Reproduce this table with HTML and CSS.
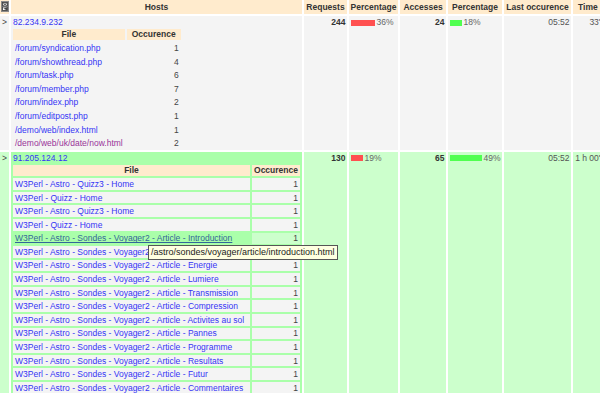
FILE: index.html
```html
<!DOCTYPE html>
<html>
<head>
<meta charset="utf-8">
<title>Hosts</title>
<link rel="stylesheet" href="styles.css">
</head>
<body>
<div class="page">
<table class="stats">
  <thead>
    <tr>
      <th class="c-icon"><svg class="toggle-icon" width="8" height="11" viewBox="0 0 8 11"><rect x="0.5" y="0.5" width="7" height="10" fill="#d8d8d8" stroke="#8a8a8a"/><rect x="1.5" y="1.5" width="5" height="3.5" fill="#fff" stroke="#444" stroke-width="0.9"/><path d="M1.8 1.8 L6.2 4.7 M6.2 1.8 L1.8 4.7" stroke="#444" stroke-width="0.8"/><rect x="1.5" y="6" width="5" height="3.5" fill="#fff" stroke="#444" stroke-width="0.9"/><path d="M6 6.3 L2.4 7.75 L6 9.2 Z" fill="#444"/></svg></th>
      <th class="c-host">Hosts</th>
      <th class="c-req">Requests</th>
      <th class="c-pct">Percentage</th>
      <th class="c-acc">Accesses</th>
      <th class="c-pct2">Percentage</th>
      <th class="c-last">Last occurence</th>
      <th class="c-time">Time</th>
    </tr>
  </thead>
  <tbody>
    <tr class="row row-gray">
      <td class="toggle">&gt;</td>
      <td class="host">
        <a class="ip" href="#h1">82.234.9.232</a>
        <table class="files files-plain">
          <tr><th class="f-file">File</th><th class="f-occ">Occurence</th></tr>
          <tr><td><a href="#a1">/forum/syndication.php</a></td><td class="occ">1</td></tr>
          <tr><td><a href="#a2">/forum/showthread.php</a></td><td class="occ">4</td></tr>
          <tr><td><a href="#a3">/forum/task.php</a></td><td class="occ">6</td></tr>
          <tr><td><a href="#a4">/forum/member.php</a></td><td class="occ">7</td></tr>
          <tr><td><a href="#a5">/forum/index.php</a></td><td class="occ">2</td></tr>
          <tr><td><a href="#a6">/forum/editpost.php</a></td><td class="occ">1</td></tr>
          <tr><td><a href="#a7">/demo/web/index.html</a></td><td class="occ">1</td></tr>
          <tr><td><a class="visited" href="#a8">/demo/web/uk/date/now.html</a></td><td class="occ">2</td></tr>
        </table>
      </td>
      <td class="num"><b>244</b></td>
      <td class="pct"><span class="bar bar-red" style="width:24px"></span>36%</td>
      <td class="num"><b>24</b></td>
      <td class="pct"><span class="bar bar-green" style="width:12px"></span>18%</td>
      <td class="num dim">05:52</td>
      <td class="num dim">33' 12''</td>
    </tr>
    <tr class="row row-green">
      <td class="toggle">&gt;</td>
      <td class="host host-open">
        <a class="ip" href="#h2">91.205.124.12</a>
        <table class="files files-boxed">
          <tr><th class="f-file">File</th><th class="f-occ">Occurence</th></tr>
          <tr><td><a href="#b1">W3Perl - Astro - Quizz3 - Home</a></td><td class="occ">1</td></tr>
          <tr><td><a href="#b2">W3Perl - Quizz - Home</a></td><td class="occ">1</td></tr>
          <tr><td><a href="#b3">W3Perl - Astro - Quizz3 - Home</a></td><td class="occ">1</td></tr>
          <tr><td><a href="#b4">W3Perl - Quizz - Home</a></td><td class="occ">1</td></tr>
          <tr class="hover"><td><a href="#b5">W3Perl - Astro - Sondes - Voyager2 - Article - Introduction</a></td><td class="occ">1</td></tr>
          <tr><td><a href="#b6">W3Perl - Astro - Sondes - Voyager2 - Article - Sommaire</a></td><td class="occ">1</td></tr>
          <tr><td><a href="#b7">W3Perl - Astro - Sondes - Voyager2 - Article - Energie</a></td><td class="occ">1</td></tr>
          <tr><td><a href="#b8">W3Perl - Astro - Sondes - Voyager2 - Article - Lumiere</a></td><td class="occ">1</td></tr>
          <tr><td><a href="#b9">W3Perl - Astro - Sondes - Voyager2 - Article - Transmission</a></td><td class="occ">1</td></tr>
          <tr><td><a href="#b10">W3Perl - Astro - Sondes - Voyager2 - Article - Compression</a></td><td class="occ">1</td></tr>
          <tr><td><a href="#b11">W3Perl - Astro - Sondes - Voyager2 - Article - Activites au sol</a></td><td class="occ">1</td></tr>
          <tr><td><a href="#b12">W3Perl - Astro - Sondes - Voyager2 - Article - Pannes</a></td><td class="occ">1</td></tr>
          <tr><td><a href="#b13">W3Perl - Astro - Sondes - Voyager2 - Article - Programme</a></td><td class="occ">1</td></tr>
          <tr><td><a href="#b14">W3Perl - Astro - Sondes - Voyager2 - Article - Resultats</a></td><td class="occ">1</td></tr>
          <tr><td><a href="#b15">W3Perl - Astro - Sondes - Voyager2 - Article - Futur</a></td><td class="occ">1</td></tr>
          <tr><td><a href="#b16">W3Perl - Astro - Sondes - Voyager2 - Article - Commentaires</a></td><td class="occ">1</td></tr>
          <tr><td><a href="#b17">W3Perl - Astro - Sondes - Voyager2 - Home</a></td><td class="occ">1</td></tr>
          <tr><td><a href="#b18">W3Perl - Astro - Sondes - Voyager1 - Home</a></td><td class="occ">1</td></tr>
        </table>
      </td>
      <td class="num"><b>130</b></td>
      <td class="pct"><span class="bar bar-red" style="width:12px"></span>19%</td>
      <td class="num"><b>65</b></td>
      <td class="pct"><span class="bar bar-green" style="width:32px"></span>49%</td>
      <td class="num dim">05:52</td>
      <td class="num dim">1 h 00' 25''</td>
    </tr>
  </tbody>
</table>
<div class="tooltip">/astro/sondes/voyager/article/introduction.html</div>
</div>
</body>
</html>
```

FILE: styles.css
```css
html, body {
  margin: 0;
  padding: 0;
  overflow: hidden;
  background: #ffffff;
}

.page {
  position: relative;
  font-family: "Liberation Sans", Arial, sans-serif;
  font-size: 8.5px;
  color: #333333;
}

a {
  color: #3535f5;
  text-decoration: none;
}

a.visited {
  color: #993399;
}

.stats {
  border-collapse: separate;
  border-spacing: 2px;
  margin: -2px 0 0 -2px;
  width: max-content;
}

.stats > thead > tr > th {
  background: #ffebcd;
  font-weight: bold;
  line-height: 10px;
  height: 14px;
  padding: 2px 1px;
  box-sizing: border-box;
  text-align: center;
  white-space: nowrap;
  color: #333333;
}

.stats > thead > tr > th.c-icon {
  width: 9px;
  padding: 1px 0 0 1px;
  text-align: left;
  vertical-align: top;
}

.toggle-icon {
  display: block;
}

.stats th.c-host { width: 291px; }
.stats th.c-req { width: 43px; }
.stats th.c-pct { width: 49px; }
.stats th.c-acc { width: 46px; }
.stats th.c-pct2 { width: 53px; }
.stats th.c-last { width: 67px; }
.stats > thead > tr > th.c-time {
  width: 44px;
  text-align: left;
  padding-left: 5px;
}

.row > td {
  vertical-align: top;
  line-height: 10px;
  padding: 1px 1.5px 0;
  white-space: nowrap;
}

.row-gray > td {
  background: #f4f4f4;
}

.row-green > td {
  background: #ccffcc;
}

.row-green > td.host-open {
  background: #aaffaa;
}

.row > td.toggle {
  padding: 1px 0 0 2px;
  color: #444444;
}

.row > td.host {
  padding: 1px 0 0 0;
}

.ip {
  display: block;
  padding-left: 2px;
  line-height: 10px;
}

.row > td.num {
  text-align: right;
}

.row > td.num b {
  color: #333333;
}

.dim {
  color: #555555;
}

.row > td.pct {
  color: #666666;
  padding-left: 2px;
}

.bar {
  display: inline-block;
  height: 6px;
  margin-right: 1.5px;
  vertical-align: -0.5px;
}

.bar-red {
  background: #ff5050;
}

.bar-green {
  background: #50ff50;
}

.files {
  border-collapse: separate;
  border-spacing: 2px;
  margin-bottom: -1px;
}

.files th {
  background: #ffebcd;
  font-weight: bold;
  line-height: 9.6px;
  padding: 0.8px 2px;
  text-align: center;
  color: #333333;
  box-sizing: border-box;
}

.files td {
  line-height: 10px;
  padding: 0.8px 2px;
  white-space: nowrap;
}

.files td.occ {
  text-align: right;
  color: #444444;
}

.files-plain th.f-file {
  width: 110px;
}

.files-plain th.f-occ {
  width: 54px;
}

.files-boxed {
  width: 100%;
}

.files-boxed th.f-occ {
  width: 48px;
}

.files-boxed td {
  background: #f4f4f4;
}

.files-boxed tr.hover td {
  background: #aaffaa;
}

.files-boxed tr.hover td.occ {
  background: #ccffcc;
}

.files-boxed tr.hover a {
  color: #336699;
  text-decoration: underline;
}

.tooltip {
  position: absolute;
  left: 148px;
  top: 247px;
  height: 15px;
  box-sizing: border-box;
  padding: 0 2px;
  background: #ffffe1;
  border: 1px solid #555555;
  font-size: 9px;
  line-height: 13px;
  color: #222222;
  white-space: nowrap;
}
```
